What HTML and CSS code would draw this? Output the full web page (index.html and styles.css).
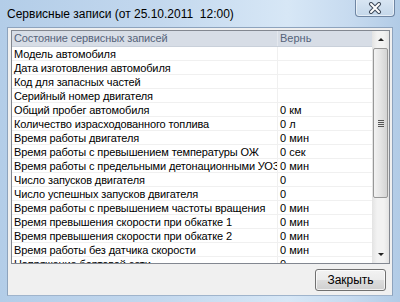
FILE: index.html
```html
<!DOCTYPE html>
<html lang="ru">
<head>
  <meta charset="UTF-8" />
  <title>Сервисные записи</title>
  <link rel="stylesheet" href="styles.css">
</head>
<body>

  <div class="window">
    <div class="titlebar">
      <span class="title">Сервисные записи (от 25.10.2011&nbsp;&nbsp;12:00)</span>
      <div class="close">
        <svg width="16" height="12" viewBox="0 0 16 12">
          <path d="M4 2 L12 10 M12 2 L4 10" stroke="#3f4b5b" stroke-width="4" stroke-linecap="round"/>
          <path d="M4 2 L12 10 M12 2 L4 10" stroke="#fff" stroke-width="2" stroke-linecap="round"/>
        </svg>
      </div>
    </div>

    <div class="client">
      <div class="listbox">
        <div class="grid">
          <div class="row head">
            <div class="cell name">Состояние сервисных записей</div>
            <div class="cell value">Вернь</div>
          </div>
          <div class="row"><div class="cell name">Модель автомобиля</div><div class="cell value"></div></div>
          <div class="row"><div class="cell name">Дата изготовления автомобиля</div><div class="cell value"></div></div>
          <div class="row"><div class="cell name">Код для запасных частей</div><div class="cell value"></div></div>
          <div class="row"><div class="cell name">Серийный номер двигателя</div><div class="cell value"></div></div>
          <div class="row"><div class="cell name">Общий пробег автомобиля</div><div class="cell value">0 км</div></div>
          <div class="row"><div class="cell name">Количество израсходованного топлива</div><div class="cell value">0 л</div></div>
          <div class="row"><div class="cell name">Время работы двигателя</div><div class="cell value">0 мин</div></div>
          <div class="row"><div class="cell name">Время работы с превышением температуры ОЖ</div><div class="cell value">0 сек</div></div>
          <div class="row"><div class="cell name">Время работы с предельными детонационными УОЗ</div><div class="cell value">0 мин</div></div>
          <div class="row"><div class="cell name">Число запусков двигателя</div><div class="cell value">0</div></div>
          <div class="row"><div class="cell name">Число успешных запусков двигателя</div><div class="cell value">0</div></div>
          <div class="row"><div class="cell name">Время работы с превышением частоты вращения</div><div class="cell value">0 мин</div></div>
          <div class="row"><div class="cell name">Время превышения скорости при обкатке 1</div><div class="cell value">0 мин</div></div>
          <div class="row"><div class="cell name">Время превышения скорости при обкатке 2</div><div class="cell value">0 мин</div></div>
          <div class="row"><div class="cell name">Время работы без датчика скорости</div><div class="cell value">0 мин</div></div>
          <div class="row"><div class="cell name">Напряжение бортовой сети</div><div class="cell value">0</div></div>
        </div>
        <div class="scrollbar">
          <div class="sb-btn"><span class="arrow up"></span></div>
          <div class="track">
            <div class="thumb"><span class="grip"></span></div>
          </div>
          <div class="sb-btn"><span class="arrow down"></span></div>
        </div>
      </div>

      <div class="footer">
        <button class="btn">Закрыть</button>
      </div>
    </div>
  </div>

</body>
</html>
```

FILE: styles.css
```css
body {
  margin: 0;
  font-family: "Liberation Sans", Arial, sans-serif;
  font-size: 11px;
  background: #fff;
}
.window {
  width: 400px;
  height: 302px;
  overflow: hidden;
  background: linear-gradient(to right, #b3cde8 0%, #c3d8ee 40%, #d7e7f6 72%, #c6daef 88%, #b1cbe6 100%);
  display: flex;
  flex-direction: column;
}
.titlebar {
  height: 27px;
  flex-shrink: 0;
  display: flex;
  align-items: flex-start;
  justify-content: space-between;
  padding: 0 5px 0 7px;
}
.title {
  font-size: 12px;
  color: #000;
  margin-top: 7px;
}
.close {
  width: 38px;
  height: 17px;
  margin-top: -1px;
  border: 1px solid #6f86a3;
  border-top: none;
  border-radius: 0 0 4px 4px;
  background: linear-gradient(#d9e6f3, #c4d7ea);
  box-shadow: inset 0 0 0 1px rgba(255,255,255,0.55);
  display: flex;
  align-items: center;
  justify-content: center;
}
.client {
  margin: 0 7px;
  height: 269px;
  flex-shrink: 0;
  background: #f0f0f0;
  border: 1px solid #8da3bd;
  border-bottom: 1px solid #9fb4cc;
  box-sizing: border-box;
  display: flex;
  flex-direction: column;
  padding: 2px 2px 0 3px;
}
.listbox {
  height: 234px;
  flex-shrink: 0;
  border: 1px solid #828790;
  background: #fff;
  display: flex;
  overflow: hidden;
  box-sizing: border-box;
}
.grid {
  flex: 1;
  overflow: hidden;
}
.row {
  display: flex;
  height: 14px;
  box-sizing: border-box;
  border-bottom: 1px solid #f0f0f0;
}
.cell {
  line-height: 14px;
  white-space: nowrap;
  overflow: hidden;
  padding-left: 2px;
}
.name {
  width: 266px;
  border-right: 1px solid #f0f0f0;
  box-sizing: border-box;
  letter-spacing: -0.12px;
}
.value {
  flex: 1;
}
.head {
  height: 16px;
  background: #d7dde6;
  border-bottom: 1px solid #c9d0da;
  color: #55637a;
}
.head .cell {
  line-height: 15px;
}
.head .name {
  border-right: 1px solid #e4e8ee;
}
.scrollbar {
  width: 17px;
  display: flex;
  flex-direction: column;
  background: linear-gradient(to right, #e3e3e3, #f2f2f2 30%, #f2f2f2 70%, #e3e3e3);
}
.sb-btn {
  height: 17px;
  display: flex;
  align-items: center;
  justify-content: center;
}
.arrow {
  width: 0;
  height: 0;
  border-left: 3px solid transparent;
  border-right: 3px solid transparent;
}
.arrow.up {
  border-bottom: 3px solid #222;
}
.arrow.down {
  border-top: 3px solid #222;
}
.track {
  flex: 1;
  padding: 0 1px;
}
.thumb {
  height: 148px;
  border: 1px solid #979797;
  border-radius: 2px;
  background: linear-gradient(to right, #f2f2f2, #e4e4e4 50%, #d3d3d3);
  display: flex;
  align-items: center;
  justify-content: center;
}
.grip {
  width: 6px;
  height: 7px;
  background: repeating-linear-gradient(#555 0 1px, transparent 1px 2px);
}
.footer {
  display: flex;
  justify-content: flex-end;
  padding: 5px 4px 0 0;
}
.btn {
  width: 71px;
  height: 22px;
  font-family: "Liberation Sans", Arial, sans-serif;
  font-size: 12px;
  color: #000;
  border: 1px solid #707070;
  border-radius: 3px;
  background: linear-gradient(#f2f2f2 0%, #ebebeb 50%, #dddddd 51%, #cfcfcf 100%);
  box-shadow: inset 0 0 0 1px rgba(255,255,255,0.7);
  padding: 0;
}
```
